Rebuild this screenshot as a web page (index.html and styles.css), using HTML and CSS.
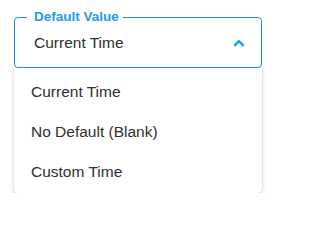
FILE: index.html
```html
<!DOCTYPE html>
<html>
<head>
<meta charset="utf-8">
<link rel="stylesheet" href="styles.css">
</head>
<body>
<div class="panel">
  <div class="field">
    <span class="label">Default Value</span>
    <span class="value">Current Time</span>
    <svg class="chevron" width="12" height="8" viewBox="0 0 12 8"><polyline points="1.3,6.8 6,2.1 10.7,6.8" fill="none" stroke="currentColor" stroke-width="2.4"/></svg>
  </div>
  <ul class="menu">
    <li class="item">Current Time</li>
    <li class="item">No Default (Blank)</li>
    <li class="item">Custom Time</li>
  </ul>
</div>
</body>
</html>
```
FILE: styles.css
```css
html, body {
  margin: 0;
  padding: 0;
  background: #ffffff;
}
body {
  font-family: "Liberation Sans", Arial, sans-serif;
  color: #2e2e2e;
}
.panel {
  width: 248px;
  padding: 17px 0 0 14px;
}
.field {
  position: relative;
  box-sizing: border-box;
  width: 248px;
  height: 51px;
  border: 1px solid #1c8fd4;
  border-radius: 4px;
  display: flex;
  align-items: center;
  justify-content: space-between;
  padding: 0 16px 0 19px;
}
.label {
  position: absolute;
  top: -9px;
  left: 12px;
  padding: 0 4px 0 7px;
  background: #ffffff;
  color: #1f9be3;
  font-weight: bold;
  font-size: 13.5px;
  line-height: 16px;
}
.value {
  font-size: 15.5px;
  line-height: 18px;
}
.chevron {
  color: #1a9be6;
  display: block;
}
.menu {
  list-style: none;
  width: 248px;
  margin: 0;
  padding: 4px 0 1px;
  background: #ffffff;
  border-radius: 0 0 4px 4px;
  box-shadow: 0 2px 5px rgba(0, 0, 0, 0.18), 0 0 1px rgba(0, 0, 0, 0.2);
}
.item {
  height: 40px;
  display: flex;
  align-items: center;
  padding-left: 17px;
  font-size: 15.5px;
}
```
